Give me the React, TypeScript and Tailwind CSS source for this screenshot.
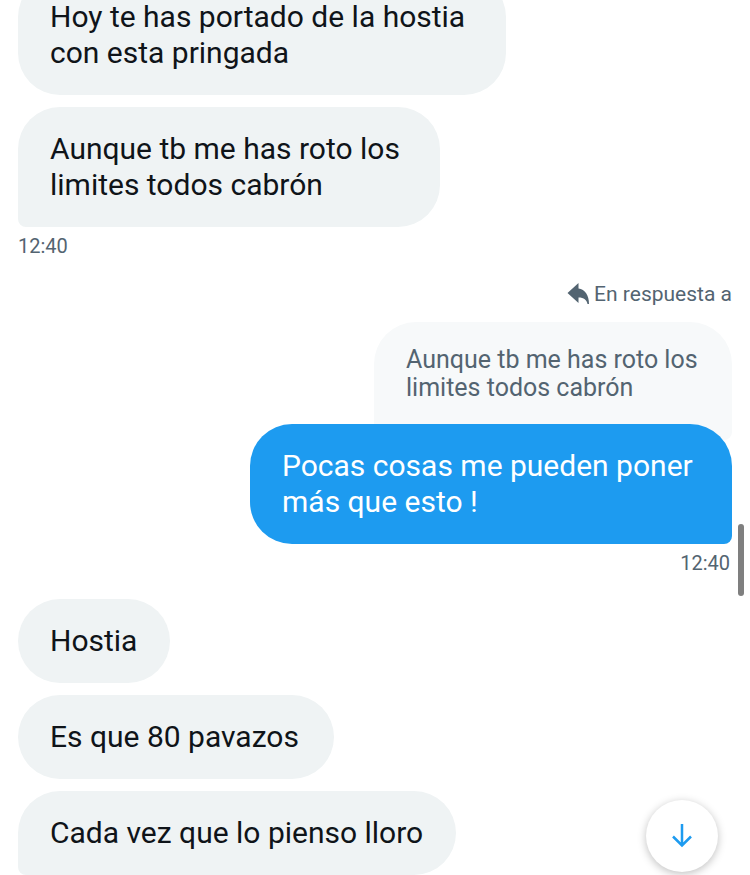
import React from 'react';

type BubbleProps = { children: React.ReactNode; tail?: boolean; width: string };

function Incoming({ children, tail, width }: BubbleProps) {
  return (
    <p
      className={`${width} max-w-full self-start rounded-t-[42px] rounded-br-[42px] bg-[#eff3f4] px-8 py-6 text-[30px] leading-9 whitespace-pre text-[#0f1419] ${tail ? 'rounded-bl-lg' : 'rounded-bl-[42px]'}`}
    >
      {children}
    </p>
  );
}

export default function App() {
  return (
    <main className="relative h-screen overflow-hidden bg-white font-[Roboto,sans-serif]">
      <section className="-mt-[25px] flex flex-col gap-3 px-[18px]">
        <Incoming width="w-[488px]">{'Hoy te has portado de la hostia\ncon esta pringada'}</Incoming>
        <div className="flex flex-col">
          <Incoming tail width="w-[422px]">{'Aunque tb me has roto los\nlimites todos cabrón'}</Incoming>
          <time className="pt-[5px] text-xl leading-7 text-[#536471]">12:40</time>
        </div>
        <div className="mt-2 flex flex-col items-end">
          <div className="flex items-center gap-1 text-[21px] leading-7 text-[#536471]">
            <svg viewBox="0 0 24 24" className="size-6" fill="currentColor" aria-hidden="true">
              <path d="M12.500 1v5.500c6.500 1 10.500 6.500 10.500 15.500h-1.500c-.8-4-3.500-6.500-9-6.500v5.500L1.500 11z" />
            </svg>
            <span>En respuesta a</span>
          </div>
          <blockquote className="mt-[14px] w-[358px] rounded-t-[42px] rounded-br-lg bg-[#f7f9fa] px-8 pt-6 pb-[38px] text-[25px] leading-7 whitespace-pre text-[#536471]">
            {'Aunque tb me has roto los\nlimites todos cabrón'}
          </blockquote>
          <p className="-mt-4 w-[482px] rounded-[42px] rounded-br-lg bg-[#1d9bf0] px-8 py-6 text-[30px] leading-9 whitespace-pre text-white">
            {'Pocas cosas me pueden poner\nmás que esto !'}
          </p>
          <time className="pt-[5px] pr-0.5 text-xl leading-7 text-[#536471]">12:40</time>
        </div>
        <div className="mt-[10px] flex flex-col gap-3">
          <Incoming width="w-[152px]">Hostia</Incoming>
          <Incoming width="w-[316px]">Es que 80 pavazos</Incoming>
          <Incoming tail width="w-[438px]">Cada vez que lo pienso lloro</Incoming>
        </div>
      </section>
      <div className="absolute top-[524px] right-1.5 h-[72px] w-1.5 rounded-full bg-[#7f7f7f]" />
      <button
        aria-label="Ir al final"
        className="absolute right-8 bottom-[3px] flex size-[72px] items-center justify-center rounded-full bg-white text-[#1d9bf0] shadow-[0_2px_8px_rgba(0,0,0,0.25)]"
      >
        <svg viewBox="0 0 24 24" className="size-6" fill="none" stroke="currentColor" strokeWidth="2.5" aria-hidden="true">
          <path d="M12 0v21.500M3 12.500l9 9 9-9" />
        </svg>
      </button>
    </main>
  );
}
